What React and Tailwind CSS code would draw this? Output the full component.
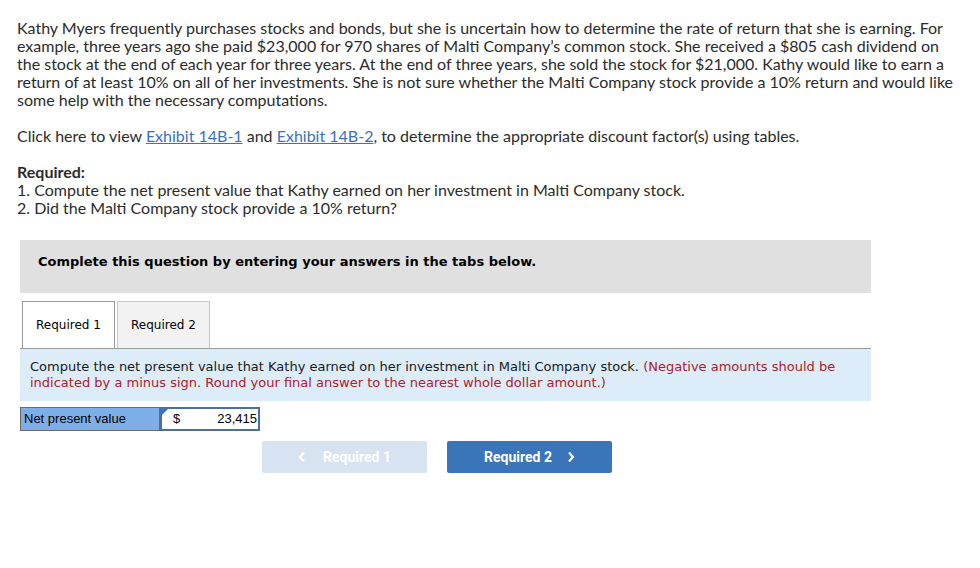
import React from "react";

const prox = { fontFamily: "Lato, 'Open Sans', sans-serif" };

export default function App() {
  return (
    <div className="w-[980px] h-[568px] bg-white text-[#2b2b2b] overflow-hidden">
      <div className="pl-[17px] pt-[19px] text-[16px] leading-[18px]" style={prox}>
        <p className="whitespace-nowrap">
          <span className="block">Kathy Myers frequently purchases stocks and bonds, but she is uncertain how to determine the rate of return that she is earning. For</span>
          <span className="block">example, three years ago she paid $23,000 for 970 shares of Malti Company’s common stock. She received a $805 cash dividend on</span>
          <span className="block">the stock at the end of each year for three years. At the end of three years, she sold the stock for $21,000. Kathy would like to earn a</span>
          <span className="block">return of at least 10% on all of her investments. She is not sure whether the Malti Company stock provide a 10% return and would like</span>
          <span className="block">some help with the necessary computations.</span>
        </p>
        <p className="mt-[18px] whitespace-nowrap">
          Click here to view <a className="text-[#3b6fc4] underline">Exhibit 14B-1</a> and{" "}
          <a className="text-[#3b6fc4] underline">Exhibit 14B-2</a>, to determine the appropriate discount factor(s) using tables.
        </p>
        <p className="mt-[18px] font-bold">Required:</p>
        <p>1. Compute the net present value that Kathy earned on her investment in Malti Company stock.</p>
        <p>2. Did the Malti Company stock provide a 10% return?</p>
      </div>

      <div className="ml-[20px] w-[851px] mt-[23px]">
        <div
          className="h-[53px] bg-[#e0e0e0] pt-[14px] pl-[18px] text-[13px] leading-[16px] font-bold text-black"
          style={{ fontFamily: "'DejaVu Sans', Verdana, sans-serif" }}
        >
          Complete this question by entering your answers in the tabs below.
        </div>

        <div
          className="mt-[8px] flex items-end gap-[2px] pl-[2px]"
          style={{ fontFamily: "'DejaVu Sans', Verdana, sans-serif" }}
        >
          <div className="w-[93px] h-[47px] bg-white border border-[#9a9a9a] border-b-0 flex items-center justify-center text-[12px] text-black">
            Required 1
          </div>
          <div className="w-[93px] h-[47px] bg-[#f2f2f2] border border-[#c8c8c8] border-b-0 flex items-center justify-center text-[12px] text-black">
            Required 2
          </div>
        </div>

        <div
          className="bg-[#dcecf9] border-t border-[#9a9a9a] h-[53px] px-[10px] pt-[10px] text-[13px] leading-[16px] text-[#1a1a1a]"
          style={{ fontFamily: "'DejaVu Sans', Verdana, sans-serif" }}
        >
          Compute the net present value that Kathy earned on her investment in Malti Company stock.{" "}
          <span className="text-[#b0202a]">
            (Negative amounts should be indicated by a minus sign. Round your final answer to the nearest whole dollar amount.)
          </span>
        </div>

        <div className="mt-[6px] flex h-[24px] w-[240px]" style={{ fontFamily: "'Liberation Sans', Arial, sans-serif" }}>
          <div className="w-[140px] bg-[#7daee6] border border-[#6a6a6a] flex items-center pl-[3px] text-[13px] text-black">
            Net present value
          </div>
          <div className="relative flex-1 bg-white border-2 border-[#4a6fa0] flex items-center text-[13px] text-black">
            <div className="absolute left-0 top-0 w-0 h-0 border-t-[6px] border-t-[#3a74c4] border-r-[6px] border-r-transparent" />
            <span className="pl-[11px]">$</span>
            <span className="ml-auto pr-[1px]">23,415</span>
          </div>
        </div>

        <div className="mt-[10px] flex gap-[20px] pl-[242px]" style={{ fontFamily: "Roboto, 'Liberation Sans', sans-serif" }}>
          <div className="w-[165px] h-[32px] rounded-[2px] bg-[#d8e3f1] flex items-center justify-center text-white text-[14px] font-bold">
            <span className="mr-[17px]">
              <svg width="8" height="12" viewBox="0 0 8 12"><path d="M6 1.5 L2 6 L6 10.5" stroke="white" strokeWidth="2.2" fill="none" /></svg>
            </span>
            Required 1
          </div>
          <div className="w-[165px] h-[32px] rounded-[2px] bg-[#3a75b9] flex items-center justify-center text-white text-[14px] font-bold">
            Required 2
            <span className="ml-[15px]">
              <svg width="8" height="12" viewBox="0 0 8 12"><path d="M2 1.5 L6 6 L2 10.5" stroke="white" strokeWidth="2.2" fill="none" /></svg>
            </span>
          </div>
        </div>
      </div>
    </div>
  );
}
